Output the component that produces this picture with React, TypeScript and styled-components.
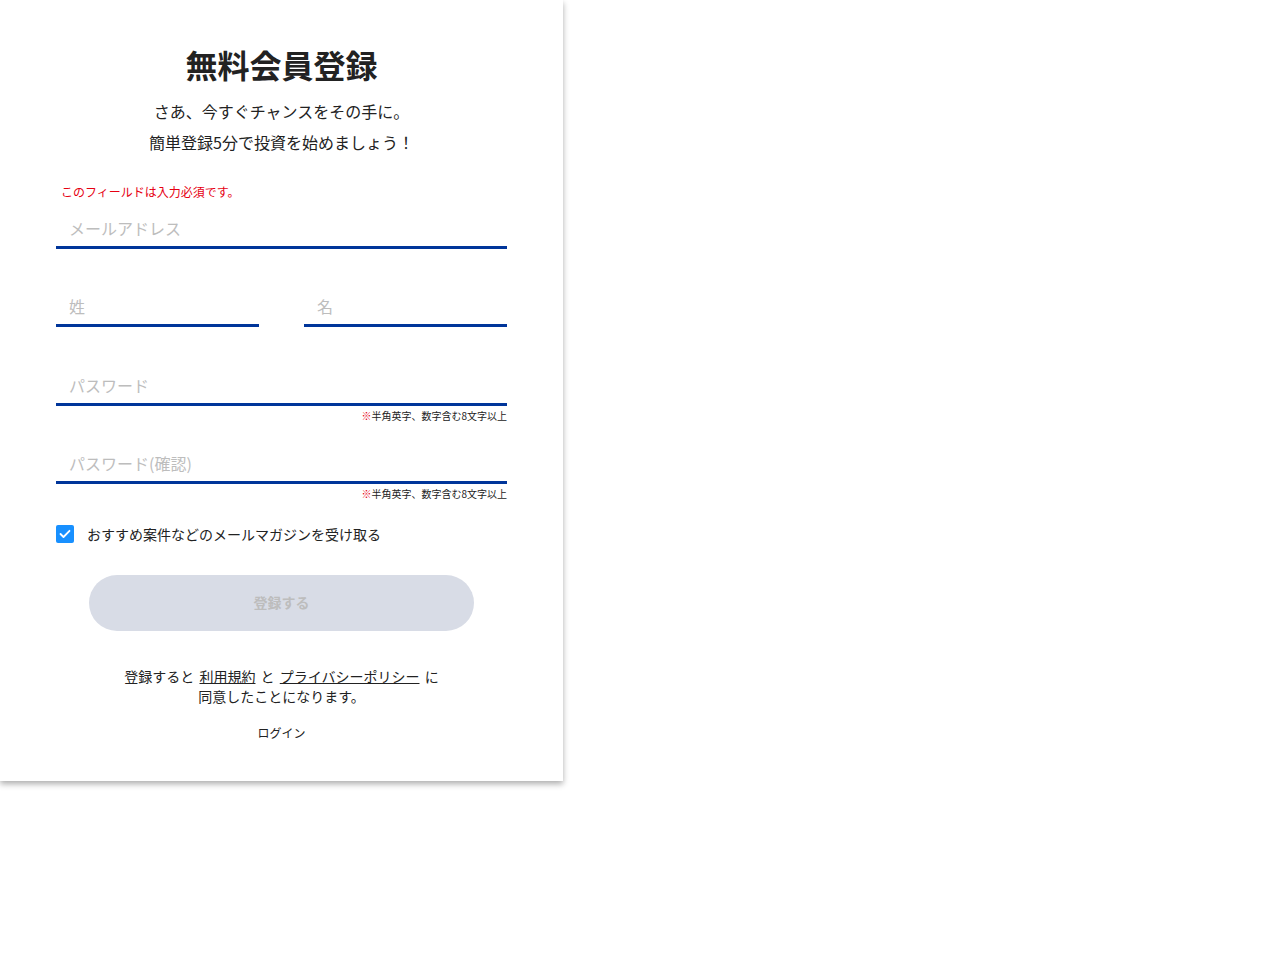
import React from "react";
import styled, { createGlobalStyle } from "styled-components";

const Global = createGlobalStyle`
  html, body { margin: 0; padding: 0; background: #fff; }
  body { font-family: "Noto Sans CJK JP", "Noto Sans", sans-serif; color: #222; }
  * { box-sizing: border-box; }
`;

const Page = styled.div`
  min-height: 960px;
  padding-bottom: 20px;
`;

const Card = styled.div`
  width: 563px;
  background: #fff;
  box-shadow: 0 3px 6px rgba(0, 0, 0, 0.32);
  padding: 44px 56px 40px;
  display: flex;
  flex-direction: column;
`;

const Title = styled.h1`
  margin: 0;
  font-size: 32px;
  line-height: 40px;
  font-weight: 700;
  text-align: center;
  color: #222;
`;

const Lead = styled.p`
  margin: 12px 0 0;
  font-size: 16px;
  line-height: 31px;
  text-align: center;
  color: #222;
`;

const ErrorText = styled.div`
  margin-top: 26px;
  padding-left: 5px;
  font-size: 12px;
  line-height: 16px;
  color: #e60012;
`;

const Field = styled.input<{ $mt: number }>`
  display: block;
  width: 100%;
  height: 40px;
  margin-top: ${(p) => p.$mt}px;
  padding: 0 13px 0;
  border: none;
  border-bottom: 3px solid #00359a;
  outline: none;
  font-family: inherit;
  font-size: 16px;
  color: #222;
  background: transparent;
  &::placeholder { color: #bdbdbd; }
`;

const NameRow = styled.div`
  display: grid;
  grid-template-columns: 1fr 1fr;
  column-gap: 45px;
  margin-top: 38px;
`;

const Hint = styled.div`
  margin-top: 3px;
  font-size: 10px;
  line-height: 14px;
  text-align: right;
  color: #222;
  span { color: #e60012; }
`;

const CheckRow = styled.label`
  display: flex;
  align-items: center;
  gap: 13px;
  margin-top: 24px;
  font-size: 14px;
  line-height: 18px;
  color: #222;
`;

const Box = styled.span`
  width: 18px;
  height: 18px;
  border-radius: 2px;
  background: #1890ff;
  display: flex;
  align-items: center;
  justify-content: center;
  flex-shrink: 0;
`;

const Submit = styled.button`
  align-self: center;
  width: 385px;
  height: 56px;
  margin-top: 32px;
  padding: 0 0 3px;
  border: none;
  border-radius: 28px;
  background: #d8dce6;
  color: #bdbdbd;
  font-family: inherit;
  font-size: 14px;
  font-weight: 700;
`;

const Terms = styled.p`
  margin: 35px 0 0;
  font-size: 14px;
  line-height: 20px;
  text-align: center;
  color: #222;
  word-spacing: 2px;
  a { color: #222; text-decoration: underline; }
`;

const Login = styled.a`
  margin-top: 19px;
  align-self: center;
  font-size: 12px;
  line-height: 16px;
  color: #222;
  text-decoration: none;
`;

export default function App() {
  return (
    <Page>
      <Global />
      <Card>
        <Title>無料会員登録</Title>
        <Lead>
          さあ、今すぐチャンスをその手に。
          <br />
          簡単登録5分で投資を始めましょう！
        </Lead>
        <ErrorText>このフィールドは入力必須です。</ErrorText>
        <Field $mt={9} placeholder="メールアドレス" />
        <NameRow>
          <Field $mt={0} placeholder="姓" />
          <Field $mt={0} placeholder="名" />
        </NameRow>
        <Field $mt={39} type="password" placeholder="パスワード" />
        <Hint>
          <span>※</span>半角英字、数字含む8文字以上
        </Hint>
        <Field $mt={21} type="password" placeholder="パスワード(確認)" />
        <Hint>
          <span>※</span>半角英字、数字含む8文字以上
        </Hint>
        <CheckRow>
          <Box>
            <svg width="12" height="10" viewBox="0 0 12 10">
              <path d="M1.5 5 L4.5 8 L10.5 1.8" fill="none" stroke="#fff" strokeWidth="1.8" strokeLinecap="round" strokeLinejoin="round" />
            </svg>
          </Box>
          おすすめ案件などのメールマガジンを受け取る
        </CheckRow>
        <Submit>登録する</Submit>
        <Terms>
          登録すると <a>利用規約</a> と <a>プライバシーポリシー</a> に
          <br />
          同意したことになります。
        </Terms>
        <Login>ログイン</Login>
      </Card>
    </Page>
  );
}
